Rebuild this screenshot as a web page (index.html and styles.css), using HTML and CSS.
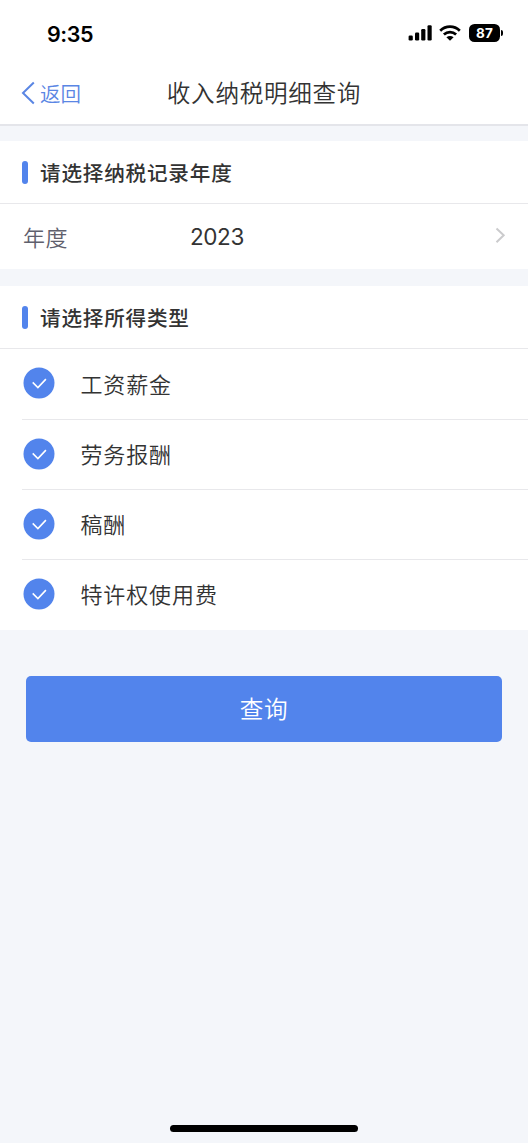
FILE: index.html
```html
<!DOCTYPE html>
<html lang="zh-CN">
<head>
<meta charset="utf-8">
<meta name="viewport" content="width=device-width, initial-scale=1">
<title>收入纳税明细查询</title>
<link rel="stylesheet" href="styles.css">
</head>
<body>
<header class="top">
  <div class="status">
    <span class="time">9:35</span>
    <div class="indicators">
      <svg class="signal" width="24" height="16" viewBox="0 0 24 16"><rect x="0.6" y="10.5" width="4.2" height="5" rx="1.2"/><rect x="7" y="7.5" width="4.2" height="8" rx="1.2"/><rect x="13.2" y="4" width="4.2" height="11.5" rx="1.2"/><rect x="19.5" y="0.3" width="4.2" height="15.2" rx="1.2"/></svg>
      <svg class="wifi" width="22" height="16" viewBox="0 0 22 16"><path d="M1.2 5.7C6.8.3 15.2.3 20.8 5.7M4.9 9.5c3.5-3.3 8.7-3.3 12.2 0" fill="none" stroke="#000" stroke-width="2.7"/><path d="M7.4 12.2c2.1-1.7 5.1-1.7 7.2 0L11 15.8z"/></svg>
      <span class="battery">87</span>
    </div>
  </div>
  <nav class="nav">
    <a class="back"><svg width="14" height="24" viewBox="0 0 14 24"><path d="M12.8 1.5 2 12l10.8 10.5" fill="none" stroke="currentColor" stroke-width="2"/></svg><span>返回</span></a>
    <h1 class="title">收入纳税明细查询</h1>
  </nav>
</header>
<main>
  <section class="card">
    <h2 class="heading">请选择纳税记录年度</h2>
    <div class="year">
      <span class="label">年度</span><span class="value">2023</span>
      <svg class="arrow" width="11" height="17" viewBox="0 0 11 17"><path d="M1.5 1.5 8.7 8.3 1.5 15.3" fill="none" stroke="#cbcbcd" stroke-width="2"/></svg>
    </div>
  </section>
  <section class="card types">
    <h2 class="heading">请选择所得类型</h2>
    <ul class="list">
      <li class="item"><svg class="check" width="32" height="32" viewBox="0 0 32 32"><circle cx="16" cy="16" r="15.5"/><path d="m9.7 15.4 5.2 5.1 8-8.4"/></svg><span>工资薪金</span></li>
      <li class="item"><svg class="check" width="32" height="32" viewBox="0 0 32 32"><circle cx="16" cy="16" r="15.5"/><path d="m9.7 15.4 5.2 5.1 8-8.4"/></svg><span>劳务报酬</span></li>
      <li class="item"><svg class="check" width="32" height="32" viewBox="0 0 32 32"><circle cx="16" cy="16" r="15.5"/><path d="m9.7 15.4 5.2 5.1 8-8.4"/></svg><span>稿酬</span></li>
      <li class="item"><svg class="check" width="32" height="32" viewBox="0 0 32 32"><circle cx="16" cy="16" r="15.5"/><path d="m9.7 15.4 5.2 5.1 8-8.4"/></svg><span>特许权使用费</span></li>
    </ul>
  </section>
  <button class="submit">查询</button>
</main>
<div class="home"></div>
</body>
</html>
```
FILE: styles.css
```css
* { box-sizing: border-box; }
body {
  margin: 0;
  height: 1143px;
  display: flex;
  flex-direction: column;
  background: #f4f6fa;
  color: #333;
  font-family: Inter, "Noto Sans CJK SC", sans-serif;
  overflow: hidden;
}
main { flex: 1; }
.top { height: 126px; background: #fff; border-bottom: 2px solid #e4e5ea; }
.status {
  height: 62px;
  display: flex;
  justify-content: space-between;
  padding: 6px 25px 0 47px;
}
.time { font-size: 21.5px; line-height: 56px; font-weight: 600; letter-spacing: -.4px; color: #000; }
.indicators { display: flex; align-items: center; height: 54px; margin-right: 3px; }
.wifi { margin: 0 8px 0 7px; }
.battery {
  position: relative;
  width: 31px;
  height: 18px;
  border-radius: 5.5px;
  background: #000;
  color: #fff;
  font-size: 13.5px;
  font-weight: 700;
  line-height: 18px;
  text-align: center;
  letter-spacing: .2px;
}
.battery::after {
  content: "";
  position: absolute;
  left: 32px;
  top: 6px;
  width: 2px;
  height: 6px;
  border-radius: 0 2px 2px 0;
  background: #000;
}
.nav {
  height: 62px;
  display: grid;
  grid-template-columns: 1fr auto 1fr;
  align-items: center;
}
.back {
  display: flex;
  align-items: center;
  gap: 5px;
  padding-left: 21px;
  color: #5a86e4;
  font-size: 20.5px;
  font-weight: 350;
}
.title {
  margin: 0;
  padding-bottom: 2px;
  font-size: 23.6px;
  font-weight: 350;
  letter-spacing: .7px;
}
.card { margin-top: 15px; background: #fff; }
.types { margin-top: 17px; }
.heading {
  height: 63px;
  margin: 0;
  padding-left: 22px;
  border-bottom: 1px solid #e8e8eb;
  display: flex;
  align-items: center;
  gap: 12px;
  font-size: 20.6px;
  font-weight: 500;
  letter-spacing: .8px;
}
.heading::before {
  content: "";
  width: 6px;
  height: 23px;
  border-radius: 3px;
  background: #5284ec;
}
.year {
  height: 65px;
  display: flex;
  align-items: center;
  padding: 0 22px 0 23px;
  font-size: 22px;
}
.label { width: 167px; padding-bottom: 2px; color: #5f606d; font-weight: 350; letter-spacing: .5px; }
.value { font-size: 22.5px; letter-spacing: -.4px; }
.arrow { margin: -3px 0 0 auto; }
.list { margin: 0; padding: 0 0 1px 22px; list-style: none; }
.item {
  height: 70px;
  display: flex;
  align-items: center;
  gap: 25px;
  padding-left: 1.4px;
  font-size: 22px;
  font-weight: 350;
  letter-spacing: .9px;
}
.item span { padding-bottom: 3px; }
.item + .item { border-top: 1px solid #e8e8eb; }
.check { fill: #5284ec; margin-top: -2px; }
.check path { fill: none; stroke: #fff; stroke-width: 1.6; }
.submit {
  display: block;
  width: 476px;
  height: 66px;
  margin: 46px auto 0;
  padding: 0 0 3px;
  border: 0;
  border-radius: 5px;
  background: #5284ec;
  color: #fff;
  font: 350 23.6px Inter, "Noto Sans CJK SC", sans-serif;
  letter-spacing: .6px;
}
.home {
  width: 188px;
  height: 7px;
  margin: 0 auto 11px;
  border-radius: 4px;
  background: #000;
}
```
